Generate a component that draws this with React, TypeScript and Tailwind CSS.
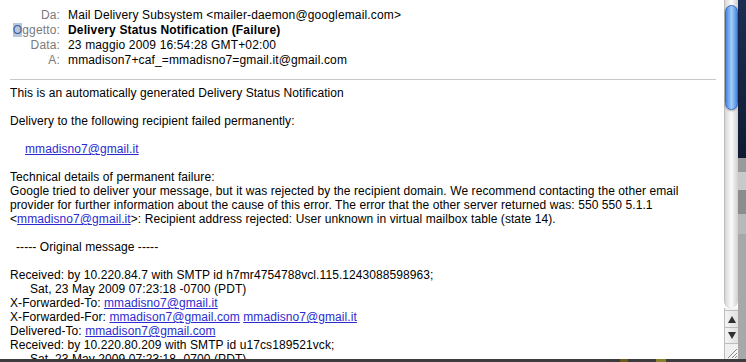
import React from "react";

const Link = ({ children }: { children: React.ReactNode }) => (
  <span className="text-[#2b2bd0] underline decoration-[#2b2bd0]">{children}</span>
);

export default function App() {
  const font = { fontFamily: '"Liberation Sans", Arial, sans-serif' };
  return (
    <div className="w-[746px] h-[362px] overflow-hidden flex flex-col bg-[#3a3a3a]" style={font}>
      <div className="flex flex-1 min-h-0">
        {/* content */}
        <div className="w-[724px] bg-white text-[12px] text-black">
          <div className="pt-[8px] leading-[15px] tracking-[0.15px]">
            <div className="flex">
              <div className="w-[60px] text-right text-[#7a7a7a]">Da:</div>
              <div className="ml-[8px] whitespace-nowrap">Mail Delivery Subsystem &lt;mailer-daemon@googlemail.com&gt;</div>
            </div>
            <div className="flex">
              <div className="w-[60px] text-right text-[#7a7a7a] whitespace-nowrap">
                <span className="bg-[#b7c7dc] text-[#3a5f9a]">O</span>ggetto:
              </div>
              <div className="ml-[8px] whitespace-nowrap font-bold">Delivery Status Notification (Failure)</div>
            </div>
            <div className="flex">
              <div className="w-[60px] text-right text-[#7a7a7a]">Data:</div>
              <div className="ml-[8px] whitespace-nowrap">23 maggio 2009 16:54:28 GMT+02:00</div>
            </div>
            <div className="flex">
              <div className="w-[60px] text-right text-[#7a7a7a]">A:</div>
              <div className="ml-[8px] whitespace-nowrap">mmadison7+caf_=mmadisno7=gmail.it@gmail.com</div>
            </div>
          </div>
          <div className="mt-[11px] ml-[10px] w-[706px] h-[1px] bg-[#c8c8c8]" />
          <div className="mt-[6px] pl-[10px] leading-[14px] whitespace-nowrap tracking-[0.08px]">
            <div>This is an automatically generated Delivery Status Notification</div>
            <div className="h-[14px]" />
            <div>Delivery to the following recipient failed permanently:</div>
            <div className="h-[14px]" />
            <div className="pl-[15px]"><Link>mmadisno7@gmail.it</Link></div>
            <div className="h-[14px]" />
            <div>Technical details of permanent failure:</div>
            <div>Google tried to deliver your message, but it was rejected by the recipient domain. We recommend contacting the other email</div>
            <div>provider for further information about the cause of this error. The error that the other server returned was: 550 550 5.1.1</div>
            <div>&lt;<Link>mmadisno7@gmail.it</Link>&gt;: Recipient address rejected: User unknown in virtual mailbox table (state 14).</div>
            <div className="h-[14px]" />
            <div className="pl-[6px]">----- Original message -----</div>
            <div className="h-[14px]" />
            <div>Received: by 10.220.84.7 with SMTP id h7mr4754788vcl.115.1243088598963;</div>
            <div className="pl-[20px]">Sat, 23 May 2009 07:23:18 -0700 (PDT)</div>
            <div>X-Forwarded-To: <Link>mmadisno7@gmail.it</Link></div>
            <div>X-Forwarded-For: <Link>mmadison7@gmail.com</Link> <Link>mmadisno7@gmail.it</Link></div>
            <div>Delivered-To: <Link>mmadison7@gmail.com</Link></div>
            <div>Received: by 10.220.80.209 with SMTP id u17cs189521vck;</div>
            <div className="pl-[20px]">Sat, 23 May 2009 07:23:18 -0700 (PDT)</div>
          </div>
        </div>
        {/* scrollbar */}
        <div className="w-[14px] flex flex-col bg-white">
          <div className="flex-1 relative bg-gradient-to-r from-[#d8d8d8] via-[#fbfbfb] to-[#cfcfcf] rounded-b-[7px] border-l border-[#bdbdbd]">
            <div className="absolute left-[0px] right-[0px] top-[5px] h-[105px] rounded-full border border-[#3a68c0] bg-gradient-to-r from-[#4a86e0] via-[#a4cdf8] to-[#4a86e0] shadow-[0_1px_2px_rgba(0,0,0,0.3)]" />
          </div>
          <div className="h-[2px] bg-[#f2f2f2] border-l border-[#bdbdbd]" />
          <div className="h-[17px] border-t border-l border-[#bdbdbd] bg-gradient-to-r from-[#f4f4f4] to-[#e0e0e0] flex items-center justify-center">
            <svg width="8" height="7" viewBox="0 0 8 7"><path d="M4 0 L8 7 L0 7 Z" fill="#303030" /></svg>
          </div>
          <div className="h-[16px] border-t border-l border-[#bdbdbd] bg-gradient-to-r from-[#f4f4f4] to-[#e0e0e0] flex items-center justify-center">
            <svg width="8" height="7" viewBox="0 0 8 7"><path d="M0 0 L8 0 L4 7 Z" fill="#303030" /></svg>
          </div>
          <div className="h-[16px] border-t border-l border-[#bdbdbd] bg-[#f0f0f0] flex items-end justify-end">
            <svg width="13" height="13" viewBox="0 0 13 13">
              <path d="M12 3 L3 12 M12 7 L7 12 M12 10 L10 12" stroke="#8a8a8a" strokeWidth="1" />
              <path d="M12.5 4 L4 12.5 M12.5 8 L8 12.5" stroke="#ffffff" strokeWidth="0.8" />
            </svg>
          </div>
        </div>
        {/* desktop strip */}
        <div className="w-[8px] flex flex-col">
          <div className="h-[158px] bg-gradient-to-b from-[#1c2f52] to-[#0f1b33]" />
          <div className="h-[14px] bg-[#9a9a9a]" />
          <div className="h-[18px] bg-[#c9c9c9]" />
          <div className="h-[24px] bg-[#8c8c8c]" />
          <div className="h-[20px] bg-[#b8b8b8]" />
          <div className="flex-1 bg-[#a8a8a8]" />
        </div>
      </div>
      <div className="h-[3px] bg-[#3c3c3c] flex">
        <div className="w-[620px]" />
        <div className="w-[8px] bg-[#6a5a20]" />
        <div className="w-[28px]" />
        <div className="w-[10px] bg-[#8a8030]" />
      </div>
    </div>
  );
}
